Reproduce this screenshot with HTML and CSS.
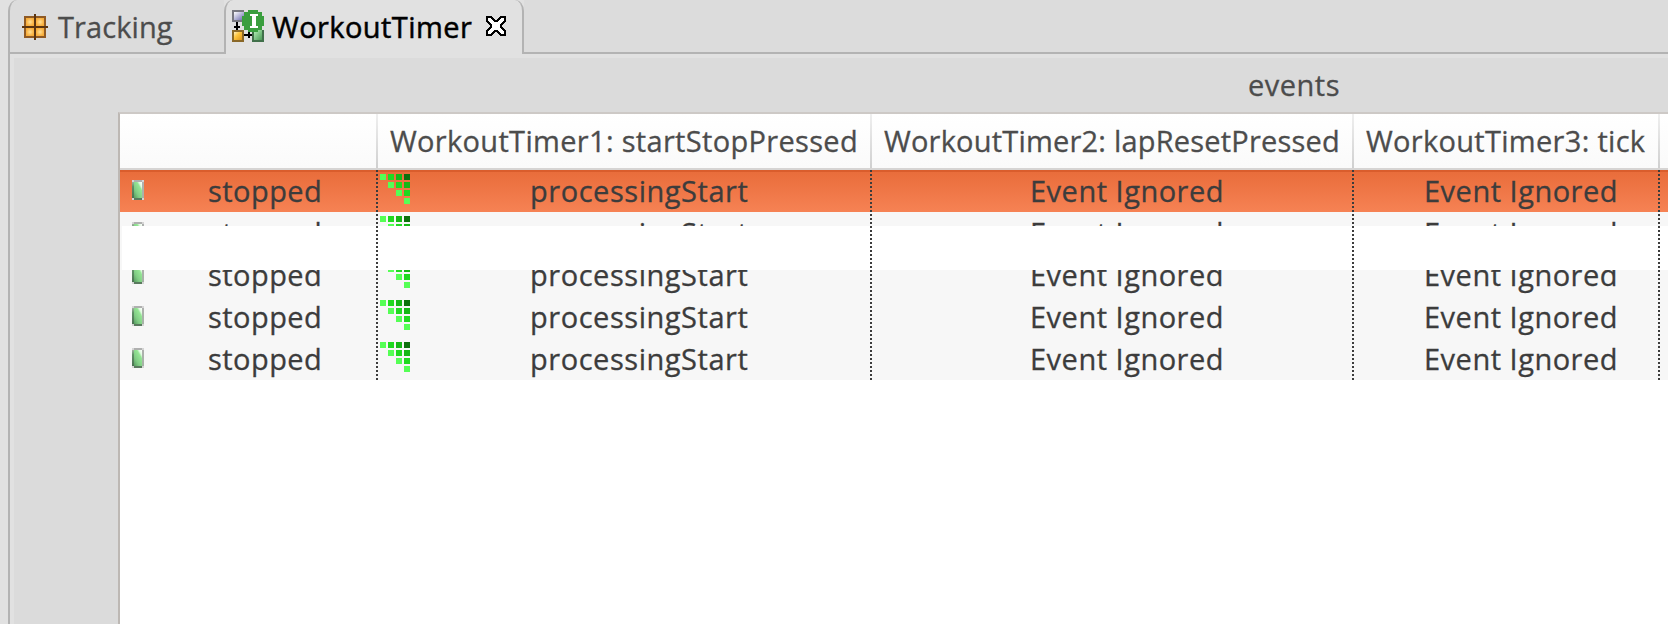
FILE: index.html
```html
<!DOCTYPE html>
<html lang="en">
<head>
<meta charset="utf-8">
<title>WorkoutTimer</title>
<link rel="stylesheet" href="styles.css">
</head>
<body>
<svg class="defs" width="0" height="0" aria-hidden="true">
  <defs>
    <linearGradient id="gem" x1="1" y1="0" x2="0.1" y2="1">
      <stop offset="0" stop-color="#fff"/><stop offset=".2" stop-color="#e0fae0"/><stop offset=".32" stop-color="#95e695"/><stop offset=".7" stop-color="#80cc84"/><stop offset="1" stop-color="#5ca264"/>
    </linearGradient>
    <linearGradient id="rim" x1="0" y1="0" x2="0" y2="1">
      <stop offset="0" stop-color="#b0b0b0"/><stop offset="1" stop-color="#a5b5a5"/>
    </linearGradient>
    <linearGradient id="edge" x1="0" y1="0" x2="0" y2="1">
      <stop offset="0" stop-color="#a0b0a0"/><stop offset=".3" stop-color="#5f9066"/><stop offset="1" stop-color="#4b7352"/>
    </linearGradient>
    <linearGradient id="purple" x1="0" y1="0" x2="1" y2="1"><stop offset="0" stop-color="#fff"/><stop offset="1" stop-color="#6868ae"/></linearGradient>
    <linearGradient id="gold" x1="0" y1="0" x2="1" y2="1"><stop offset="0" stop-color="#fff0c0"/><stop offset=".4" stop-color="#ffc53d"/><stop offset="1" stop-color="#dd9518"/></linearGradient>
    <linearGradient id="leaf" x1="0" y1="0" x2="1" y2="1"><stop offset="0" stop-color="#b5f0b8"/><stop offset="1" stop-color="#4a9a55"/></linearGradient>
    <radialGradient id="cell"><stop offset="0" stop-color="#ffe096"/><stop offset="1" stop-color="#f8ad3a"/></radialGradient>
    <symbol id="state" viewBox="0 0 6 10">
      <path d="M1 0H5V1H6V9H5V10H1V9H0V1H1Z" fill="url(#rim)"/>
      <path d="M0 1H1V9H0Z" fill="url(#edge)"/>
      <path d="M1 9H5V10H1Z" fill="#5a7a5e"/>
      <path d="M1 1H5V9H1Z" fill="url(#gem)"/>
      <path d="M0 0H1V1H0ZM5 0H6V1H5ZM0 9H1V10H0ZM5 9H6V10H5Z" fill="#d5d5d5"/>
    </symbol>
    <symbol id="steps" viewBox="0 0 30 30">
      <path d="M0 0H6V6H0ZM8 8H14V14H8ZM16 16H22V22H16ZM24 24H30V30H24Z" fill="#55ff55"/>
      <path d="M8 0H14V6H8ZM16 8H22V14H16ZM24 16H30V22H24Z" fill="#20d920"/>
      <path d="M16 0H22V6H16ZM24 8H30V14H24Z" fill="#16b716"/>
      <path d="M24 0H30V6H24Z" fill="#0d700d"/>
    </symbol>
  </defs>
</svg>
<div class="window">
  <div class="tabs">
    <div class="tab tracking">
      <svg class="track-icon" viewBox="0 0 13 13" shape-rendering="crispEdges">
        <path d="M1 1H12V12H1Z" fill="#8f5a24"/>
        <path d="M2 2H6V6H2Z" fill="url(#cell)"/><path d="M7 2H11V6H7Z" fill="url(#cell)"/>
        <path d="M2 7H6V11H2Z" fill="url(#cell)"/><path d="M7 7H11V11H7Z" fill="url(#cell)"/>
        <path d="M6 0H7V13H6ZM0 6H13V7H0Z" fill="#5c3510"/>
      </svg>
      <span class="tracking-name">Tracking</span>
    </div>
    <div class="tab active">
      <svg class="machine-icon" viewBox="0 0 16 16" shape-rendering="crispEdges">
        <path d="M0 0H6V6H0Z" fill="#77777f"/><path d="M1 1H6V5H1Z" fill="url(#purple)"/>
        <path d="M0 10H6V16H0Z" fill="#8a6828"/><path d="M1 11H5V15H1Z" fill="url(#gold)"/>
        <path d="M10 10H16V16H10Z" fill="#41704a"/><path d="M11 10H15V15H11Z" fill="url(#leaf)"/>
        <path d="M2 6H3V8H4V9H3V10H2V9H1V8H2ZM6 12H8V11H9V12H10V13H9V14H8V13H6Z" fill="#000"/>
        <path d="M8 0H13V1H15V3H16V8H15V10H13V11H8V10H6V8H5V3H6V1H8Z" fill="#3a9e3e"/>
        <path d="M9 2H13V3H12V8H13V9H9V8H10V3H9Z" fill="#fff"/>
      </svg>
      <span class="active-name">WorkoutTimer</span>
      <svg class="close-icon" viewBox="0 0 10 10" shape-rendering="crispEdges">
        <path d="M.5 .5H2.5L4.5 2.5H5.5L7.5 .5H9.5V2.5L7.5 4.5V5.5L9.5 7.5V9.5H7.5L5.5 7.5H4.5L2.5 9.5H.5V7.5L2.5 5.5V4.5L.5 2.5Z" fill="#fff" stroke="#000"/>
      </svg>
    </div>
    <div class="tab-rest"></div>
  </div>
  <div class="view">
    <div class="caption"><span>events</span></div>
    <div class="table">
      <div class="row header">
        <div></div>
        <div><span class="h1">WorkoutTimer1: startStopPressed</span></div>
        <div><span class="h2">WorkoutTimer2: lapResetPressed</span></div>
        <div><span class="h3">WorkoutTimer3: tick</span></div>
        <div></div>
      </div>
      <div class="rows">
        <div class="row selected">
          <div class="state"><svg class="state-icon" shape-rendering="crispEdges"><use href="#state"/></svg><span>stopped</span></div>
          <div class="action"><svg class="steps-icon"><use href="#steps"/></svg><span>processingStart</span></div>
          <div class="ignored">Event Ignored</div>
          <div class="ignored last">Event Ignored</div>
        </div>
        <div class="row cut-bottom">
          <div class="state"><svg class="state-icon" shape-rendering="crispEdges"><use href="#state"/></svg><span>stopped</span></div>
          <div class="action"><svg class="steps-icon"><use href="#steps"/></svg><span>processingStart</span></div>
          <div class="ignored">Event Ignored</div>
          <div class="ignored last">Event Ignored</div>
        </div>
        <div class="blank"></div>
        <div class="row cut-top">
          <div class="state"><svg class="state-icon" shape-rendering="crispEdges"><use href="#state"/></svg><span>stopped</span></div>
          <div class="action"><svg class="steps-icon"><use href="#steps"/></svg><span>processingStart</span></div>
          <div class="ignored">Event Ignored</div>
          <div class="ignored last">Event Ignored</div>
        </div>
        <div class="row">
          <div class="state"><svg class="state-icon" shape-rendering="crispEdges"><use href="#state"/></svg><span>stopped</span></div>
          <div class="action"><svg class="steps-icon"><use href="#steps"/></svg><span>processingStart</span></div>
          <div class="ignored">Event Ignored</div>
          <div class="ignored last">Event Ignored</div>
        </div>
        <div class="row">
          <div class="state"><svg class="state-icon" shape-rendering="crispEdges"><use href="#state"/></svg><span>stopped</span></div>
          <div class="action"><svg class="steps-icon"><use href="#steps"/></svg><span>processingStart</span></div>
          <div class="ignored">Event Ignored</div>
          <div class="ignored last">Event Ignored</div>
        </div>
        <div class="dividers"></div>
      </div>
    </div>
  </div>
</div>
</body>
</html>
```
FILE: styles.css
```css
* { box-sizing: border-box; }
body {
  margin: 0;
  background: #e1e1e1;
  font-family: "Open Sans", "Noto Sans", sans-serif;
  font-size: 29px;
  color: #3c3c3c;
  -webkit-text-stroke: .3px;
  overflow: hidden;
  white-space: nowrap;
}
svg { display: block; flex: none; }
.defs { position: absolute; }
.window { height: 624px; padding-left: 8px; display: flex; flex-direction: column; }

/* Tab strip */
.tabs { display: flex; height: 54px; line-height: 54px; }
.tab { display: flex; border: 2px solid #b3b3b3; border-top: 0; }
.tracking {
  width: 216px;
  padding-left: 12px;
  border-right: 0;
  border-top-left-radius: 9px 11px;
  background: #dcdcdc;
  color: #4c4c4c;
}
.track-icon { width: 26px; height: 26px; margin-top: 14px; }
.tracking-name { margin-left: 10px; letter-spacing: .1px; }
.active {
  width: 300px;
  padding-left: 6px;
  border-bottom: 0;
  border-radius: 9px 9px 0 0 / 11px 11px 0 0;
  background: #e1e1e1;
  color: #000;
}
.machine-icon { width: 32px; height: 32px; margin-top: 10px; }
.active-name { width: 214px; margin-left: 8px; letter-spacing: .42px; -webkit-text-stroke: .5px; }
.close-icon { width: 20px; height: 20px; margin-top: 16px; }
.tab-rest { flex: 1; background: #dcdcdc; border-bottom: 2px solid #b3b3b3; }

/* View body */
.view {
  flex: 1;
  min-height: 0;
  display: flex;
  flex-direction: column;
  border-left: 2px solid #b3b3b3;
  padding: 4px 0 0 4px;
  background: linear-gradient(#dbdbdb, #dbdbdb) 4px 4px no-repeat #e1e1e1;
}
.caption { height: 54px; line-height: 54px; padding-left: 1234px; color: #4c4c4c; letter-spacing: .5px; }
.table {
  flex: 1;
  margin-left: 104px;
  border: solid #bdb8b4;
  border-width: 2px 0 0 2px;
  border-top-color: #cdc9c6;
  background: #fff;
}
.row {
  display: grid;
  grid-template-columns: 258px 494px 482px 306px 8px;
  height: 42px;
  line-height: 42px;
  background: #f7f7f7;
  overflow: hidden;
}
.header { height: 56px; line-height: 54px; background: #fff; border-bottom: 2px solid #d6d4d3; color: #4c4c4c; }
.header > div {
  padding-left: 12px;
  border-right: 2px solid;
  border-image: linear-gradient(#f0f0f0, #cfcfcf) 1;
  border-width: 0 2px 0 0;
  background: linear-gradient(#fff, #fafafa);
}
.header > div:last-child { border: 0; }
.h1 { letter-spacing: .32px; }
.h2 { letter-spacing: .2px; }
.h3 { letter-spacing: .3px; }

.rows { position: relative; }
.selected { background: linear-gradient(#da5d2c 2px, #e96d3b 2px, #f68254); }
.cut-bottom { height: 14px; }
.blank { height: 44px; background: #fff; border-left: 2px solid #f7f7f7; }
.cut-top { height: 26px; align-content: end; }
.state, .action { display: flex; height: 42px; }
.state { padding-left: 12px; letter-spacing: .45px; }
.state-icon { width: 12px; height: 20px; margin: 10px 64px 0 0; }
.action { padding-left: 2px; letter-spacing: .54px; }
.steps-icon { width: 30px; height: 30px; margin: 4px 120px 0 0; }
.ignored { height: 42px; padding-left: 158px; letter-spacing: .5px; }
.last { padding-left: 70px; }

/* Dotted column rules drawn over the rows */
.dividers {
  position: absolute;
  inset: 0;
  --dots: repeating-linear-gradient(#3c3c3c 0 2px, transparent 2px 4px);
  background: var(--dots) 256px 0, var(--dots) 750px 0, var(--dots) 1232px 0, var(--dots) 1538px 0;
  background-size: 2px 100%;
  background-repeat: no-repeat;
}
```
